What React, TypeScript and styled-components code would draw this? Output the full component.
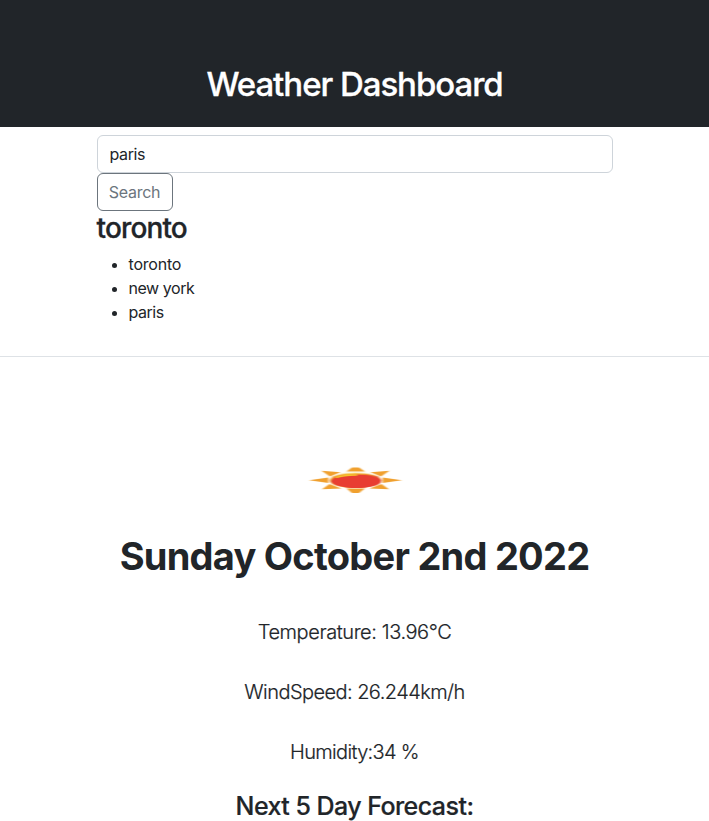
import React from "react";
import styled, { createGlobalStyle } from "styled-components";

const Global = createGlobalStyle`
  *, *::before, *::after { box-sizing: border-box; }
  body { margin: 0; background: #fff; color: #212529; font: 400 16px/24px Inter, sans-serif; overflow: hidden; }
`;
const Header = styled.header`
  height: 127px; background: #212529; color: #fff; padding-top: 64px; text-align: center;
`;
const Title = styled.h1`
  margin: 0; font-size: 33px; line-height: 41px; font-weight: 500; letter-spacing: -1.05px;
  -webkit-text-stroke: 0.3px currentColor;
`;
const SearchPanel = styled.section`
  width: 516px; margin: 8px auto 0;
`;
const Input = styled.input`
  display: block; width: 100%; height: 38px; padding: 6px 12px; border: 1px solid #ced4da; border-radius: 6px;
  font: inherit; letter-spacing: -0.4px; color: #212529; background: #fff; outline: 0;
`;
const Button = styled.button`
  display: block; width: 76px; height: 38px; padding: 0; border: 1px solid #6c757d; border-radius: 6px;
  background: #fff; color: #6c757d; font: inherit; letter-spacing: -0.3px;
`;
const City = styled.h3`
  margin: 0 0 7px; font-size: 28px; line-height: 35px; font-weight: 500; letter-spacing: -0.85px;
  -webkit-text-stroke: 0.3px currentColor;
`;
const History = styled.ul`
  margin: -1px 0 0; padding-left: 32px;
`;
const HistoryItem = styled.li<{ $tracking: number }>`
  letter-spacing: ${(p) => p.$tracking}px;
`;
const Divider = styled.hr`
  margin: 32px 0 0; border: 0; height: 1px; background: #dee2e6;
`;
const Weather = styled.main`
  display: flex; flex-direction: column; align-items: center; padding-top: 109px; text-align: center;
`;
const SunIcon = styled.svg`
  display: block; width: 96px; height: 28px; overflow: visible;
`;
const DateTitle = styled.h1`
  margin: 38px 0 0; font-size: 38px; line-height: 48px; font-weight: 700; letter-spacing: -0.75px;
`;
const Readings = styled.div`
  margin-top: 37px; display: grid; gap: 30px;
`;
const Reading = styled.p<{ $tracking: number }>`
  margin: 0; font-size: 20px; line-height: 30px; font-weight: 300; letter-spacing: ${(p) => p.$tracking}px;
  -webkit-text-stroke: 0.2px currentColor;
`;
const Forecast = styled.h4`
  margin: 24px 0 0; font-size: 25px; line-height: 31px; font-weight: 500; letter-spacing: -0.55px;
  -webkit-text-stroke: 0.2px currentColor;
`;

const cities = [
  { name: "toronto", tracking: -0.2 },
  { name: "new york", tracking: -0.45 },
  { name: "paris", tracking: -0.45 },
];
const readings = [
  { text: "Temperature: 13.96°C", tracking: -0.42 },
  { text: "WindSpeed: 26.244km/h", tracking: -0.56 },
  { text: "Humidity:34 %", tracking: -0.68 },
];

export default function App() {
  return (
    <>
      <Global />
      <Header><Title>Weather Dashboard</Title></Header>
      <SearchPanel>
        <Input defaultValue="paris" />
        <Button>Search</Button>
        <City>toronto</City>
        <History>
          {cities.map((c) => <HistoryItem key={c.name} $tracking={c.tracking}>{c.name}</HistoryItem>)}
        </History>
      </SearchPanel>
      <Divider />
      <Weather>
        <SunIcon viewBox="0 0 96 28">
          <defs>
            <filter id="soft" x="-10%" y="-20%" width="120%" height="140%">
              <feGaussianBlur stdDeviation="0.8 0.4" />
            </filter>
            <linearGradient id="rim" x1="0" y1="0" x2="1" y2="0.3">
              <stop offset="0" stopColor="#ee8a2c" />
              <stop offset="0.4" stopColor="#f6c22e" />
              <stop offset="1" stopColor="#e8502e" />
            </linearGradient>
          </defs>
          <g filter="url(#soft)">
            <path fill="#f0a02e" d="M45 1.5H52L58 5.6H39.5ZM14.5 4.8L33.5 6.2L23 10.5ZM82.5 4.8L63.5 6.2L74 10.5ZM2 14.3L21.5 11.6V17ZM95 14.3L75.5 11.6V17ZM15 23.3L22.5 18L34.5 22.5ZM82 23.3L74.5 18L62.5 22.5ZM39.5 22.4H58L52 27H45Z" />
            <ellipse cx="48.6" cy="14.2" rx="26.5" ry="8" fill="#fbe9bd" />
            <ellipse cx="48.6" cy="14.6" rx="25.7" ry="7.4" fill="url(#rim)" />
            <ellipse cx="49" cy="15.2" rx="25" ry="6.7" fill="#e83e30" />
            <path d="M29 11.6Q37 8.8 50 9" fill="none" stroke="#f6c22e" strokeWidth="1.5" />
          </g>
        </SunIcon>
        <DateTitle>Sunday October 2nd 2022</DateTitle>
        <Readings>
          {readings.map((r) => <Reading key={r.text} $tracking={r.tracking}>{r.text}</Reading>)}
        </Readings>
        <Forecast>Next 5 Day Forecast:</Forecast>
      </Weather>
    </>
  );
}
